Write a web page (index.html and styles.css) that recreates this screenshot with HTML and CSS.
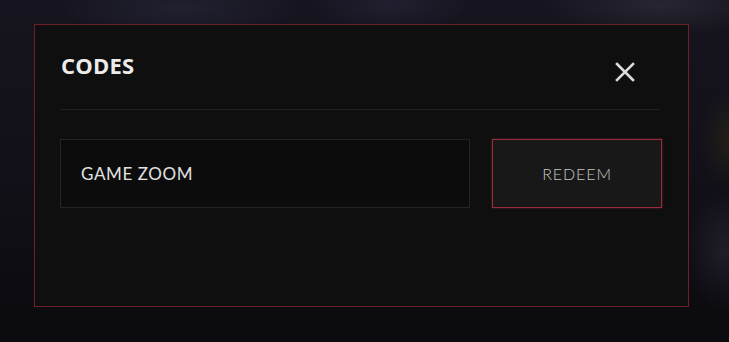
FILE: index.html
```html
<!DOCTYPE html>
<html lang="en">

<head>
	<meta charset="UTF-8">
	<meta name="viewport" content="width=device-width, initial-scale=1.0">
	<title>Codes</title>
	<link rel="stylesheet" href="styles.css">
</head>

<body>
	<div class="backdrop">
		<!--codes modal-->
		<div class="modal">
			<div class="modal__head">
				<div class="modal__title">CODES</div>
				<button class="modal__close" aria-label="close">
					<svg width="20" height="20" viewBox="0 0 20 20">
						<path d="M2 2 L18 18 M18 2 L2 18" stroke="#dcdcdc" stroke-width="2.6" stroke-linecap="square" fill="none" />
					</svg>
				</button>
			</div>
			<div class="modal__body">
				<input class="code-input" type="text" value="GAME ZOOM">
				<button class="redeem">REDEEM</button>
			</div>
		</div>
	</div>
</body>

</html>
```

FILE: styles.css
```css
* {
	margin: 0;
	padding: 0;
	box-sizing: border-box;
}

body {
	width: 729px;
	height: 342px;
	overflow: hidden;
	font-family: "Lato", "Liberation Sans", sans-serif;
}

.backdrop {
	width: 729px;
	height: 342px;
	padding: 24px 0 0 34px;
	background:
		radial-gradient(ellipse 120px 30px at 180px 8px, rgba(60, 60, 90, 0.3), transparent),
		radial-gradient(ellipse 80px 25px at 390px 5px, rgba(70, 60, 100, 0.25), transparent),
		radial-gradient(ellipse 120px 30px at 660px 5px, rgba(90, 90, 100, 0.25), transparent),
		radial-gradient(ellipse 30px 50px at 729px 140px, rgba(80, 65, 20, 0.25), transparent),
		radial-gradient(ellipse 40px 60px at 725px 250px, rgba(70, 65, 85, 0.3), transparent),
		linear-gradient(180deg, #16151f 0%, #121119 50%, #0b0a0e 100%);
}

.modal {
	width: 655px;
	height: 283px;
	background: #0f0f0f;
	border: solid 1px #6e1f2c;
	padding: 0 26px 0 25px;
}

.modal__head {
	display: flex;
	justify-content: space-between;
	align-items: center;
	height: 85px;
	padding-bottom: 5px;
	border-bottom: solid 1px #212121;
	margin-right: 2px;
}

.modal__title {
	font-family: "Open Sans", sans-serif;
	font-weight: 700;
	font-size: 22px;
	color: #ececec;
	padding-left: 1px;
	letter-spacing: 0.2px;
}

.modal__close {
	background: none;
	border: none;
	width: 20px;
	height: 20px;
	margin: 14px 25px 0 0;
}

.modal__body {
	display: flex;
	gap: 22px;
	margin-top: 29px;
}

.code-input {
	width: 410px;
	height: 69px;
	background: #0c0c0c;
	border: solid 1px #242424;
	padding-left: 20px;
	font-family: "Lato", sans-serif;
	font-size: 17px;
	letter-spacing: 0.6px;
	color: #e2e2e2;
	outline: none;
}

.redeem {
	width: 170px;
	height: 69px;
	background: #181818;
	border: solid 1px #9a2b3b;
	box-shadow: 0 0 2px rgba(154, 43, 59, 0.6);
	font-family: "Lato", sans-serif;
	font-weight: 300;
	font-size: 16px;
	letter-spacing: 0.9px;
	color: #c4c4c4;
}
```
